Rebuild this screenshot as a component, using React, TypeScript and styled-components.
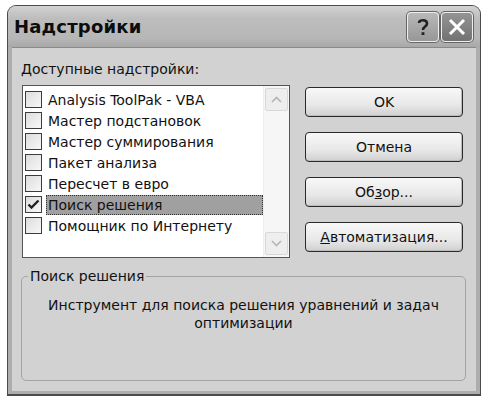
import React from 'react';
import styled, { createGlobalStyle } from 'styled-components';

const GlobalStyle = createGlobalStyle`
  html, body {
    margin: 0;
    padding: 0;
    background: #ffffff;
  }
  body {
    font-family: "DejaVu Sans", "Liberation Sans", sans-serif;
    font-size: 14px;
    color: #111;
  }
`;

const Window = styled.div`
  box-sizing: border-box;
  margin: 5px 0 0 7px;
  width: 474px;
  height: 391px;
  display: flex;
  flex-direction: column;
  border: 1px solid #4a4a4a;
  border-bottom-width: 2px;
  border-radius: 9px 9px 0 0;
  background: #adadad;
  overflow: hidden;
`;

const TitleBar = styled.div`
  height: 41px;
  display: flex;
  align-items: center;
  padding: 0 7px 0 6px;
  background: linear-gradient(#d2d2d2 0%, #bdbdbd 30%, #b6b6b6 80%, #a8a8a8 100%);
`;

const Title = styled.div`
  flex: 1;
  font-size: 18px;
  font-weight: bold;
  color: #0c0c0c;
  letter-spacing: 0.2px;
`;

const TitleButtons = styled.div`
  display: flex;
  gap: 2px;
`;

const TitleButton = styled.div<{ $dark?: boolean }>`
  box-sizing: border-box;
  width: 32px;
  height: 30px;
  display: flex;
  align-items: center;
  justify-content: center;
  border: 1px solid #eeeeee;
  border-radius: 4px;
  background: ${(p) =>
    p.$dark
      ? 'linear-gradient(#949494, #727272)'
      : 'linear-gradient(#b8b8b8, #979797)'};
  box-shadow: 0 0 0 1px #666;
`;

const Client = styled.div`
  flex: 1;
  margin: 0 4px 3px 4px;
  padding: 13px 11px 0 9px;
  background: #d2d2d2;
  border-top: 1px solid #8a8a8a;
  display: flex;
  flex-direction: column;
`;

const Label = styled.div`
  line-height: 17px;
`;

const Top = styled.div`
  display: flex;
  margin-top: 7px;
  margin-left: 1px;
`;

const ListBox = styled.div`
  box-sizing: border-box;
  width: 268px;
  height: 173px;
  display: flex;
  border: 1px solid #555;
  background: #fff;
`;

const Items = styled.div`
  flex: 1;
  padding-top: 3px;
  padding-left: 2px;
  display: flex;
  flex-direction: column;
`;

const Row = styled.div`
  height: 21px;
  display: flex;
  align-items: center;
`;

const Check = styled.div`
  box-sizing: border-box;
  width: 17px;
  height: 17px;
  border: 1px solid #3c3c3c;
  background: linear-gradient(135deg, #dcdcdc, #f8f8f8);
  display: flex;
  align-items: center;
  justify-content: center;
  flex: 0 0 auto;
`;

const ItemText = styled.div<{ $selected?: boolean }>`
  flex: 1;
  margin-left: 4px;
  height: 20px;
  line-height: 18px;
  box-sizing: border-box;
  padding-left: 1px;
  white-space: nowrap;
  border: 1px dotted ${(p) => (p.$selected ? '#333' : 'transparent')};
  background: ${(p) => (p.$selected ? '#a0a0a0' : 'transparent')};
`;

const ScrollBar = styled.div`
  width: 25px;
  display: flex;
  flex-direction: column;
  justify-content: space-between;
  background: #f6f6f6;
  border-left: 1px solid #ededed;
`;

const ScrollButton = styled.div`
  box-sizing: border-box;
  height: 23px;
  margin: 2px 1px;
  display: flex;
  align-items: center;
  justify-content: center;
  border: 1px solid #d8d8d8;
  border-radius: 2px;
  background: #eeeeee;
`;

const Buttons = styled.div`
  margin-left: 15px;
  margin-top: 2px;
  display: flex;
  flex-direction: column;
  gap: 15px;
`;

const Button = styled.div`
  box-sizing: border-box;
  width: 158px;
  height: 30px;
  display: flex;
  align-items: center;
  justify-content: center;
  border: 1px solid #2a2a2a;
  border-radius: 4px;
  background: linear-gradient(#f8f8f8 0%, #e8e8e8 60%, #d0d0d0 100%);
  box-shadow: inset -1px -1px 0 #bcbcbc;
`;

const Group = styled.div`
  position: relative;
  box-sizing: border-box;
  margin-top: 18px;
  width: 445px;
  height: 105px;
  border: 1px solid #a4a4a4;
  border-radius: 5px;
  padding: 19px 10px 0;
`;

const GroupLegend = styled.div`
  position: absolute;
  top: -9px;
  left: 6px;
  padding: 0 2px;
  line-height: 17px;
  background: #d2d2d2;
`;

const Description = styled.div`
  text-align: center;
  line-height: 18px;
  padding: 0 14px;
`;

const Arrow = ({ down }: { down?: boolean }) => (
  <svg width="11" height="7" viewBox="0 0 11 7">
    <polyline
      points={down ? '1,1 5.5,5.5 10,1' : '1,6 5.5,1.5 10,6'}
      fill="none"
      stroke="#b5b5b5"
      strokeWidth="1.6"
    />
  </svg>
);

const Tick = () => (
  <svg width="13" height="11" viewBox="0 0 13 11">
    <polyline points="1.5,5.5 4.5,8.5 11.5,1.5" fill="none" stroke="#222" strokeWidth="2.4" />
  </svg>
);

const items = [
  'Analysis ToolPak - VBA',
  'Мастер подстановок',
  'Мастер суммирования',
  'Пакет анализа',
  'Пересчет в евро',
  'Поиск решения',
  'Помощник по Интернету',
];

export default function App() {
  return (
    <>
      <GlobalStyle />
      <Window>
        <TitleBar>
          <Title>Надстройки</Title>
          <TitleButtons>
            <TitleButton>
              <svg width="14" height="20" viewBox="0 0 14 20">
                <path
                  d="M3 6 C3 2.5 11 2 11 6.5 C11 9.5 7 9.5 7 13"
                  fill="none"
                  stroke="#222"
                  strokeWidth="2.6"
                />
                <rect x="5.6" y="15.2" width="2.8" height="2.8" fill="#222" />
              </svg>
            </TitleButton>
            <TitleButton $dark>
              <svg width="20" height="20" viewBox="0 0 20 20">
                <path d="M3 3 L17 17 M17 3 L3 17" stroke="#fff" strokeWidth="3" />
              </svg>
            </TitleButton>
          </TitleButtons>
        </TitleBar>
        <Client>
          <Label>Доступные надстройки:</Label>
          <Top>
            <ListBox>
              <Items>
                {items.map((name) => (
                  <Row key={name}>
                    <Check>{name === 'Поиск решения' && <Tick />}</Check>
                    <ItemText $selected={name === 'Поиск решения'}>{name}</ItemText>
                  </Row>
                ))}
              </Items>
              <ScrollBar>
                <ScrollButton>
                  <Arrow />
                </ScrollButton>
                <ScrollButton>
                  <Arrow down />
                </ScrollButton>
              </ScrollBar>
            </ListBox>
            <Buttons>
              <Button>OK</Button>
              <Button>Отмена</Button>
              <Button>
                <span>
                  Об<u>з</u>ор...
                </span>
              </Button>
              <Button>
                <span>
                  <u>А</u>втоматизация...
                </span>
              </Button>
            </Buttons>
          </Top>
          <Group>
            <GroupLegend>Поиск решения</GroupLegend>
            <Description>Инструмент для поиска решения уравнений и задач оптимизации</Description>
          </Group>
        </Client>
      </Window>
    </>
  );
}
